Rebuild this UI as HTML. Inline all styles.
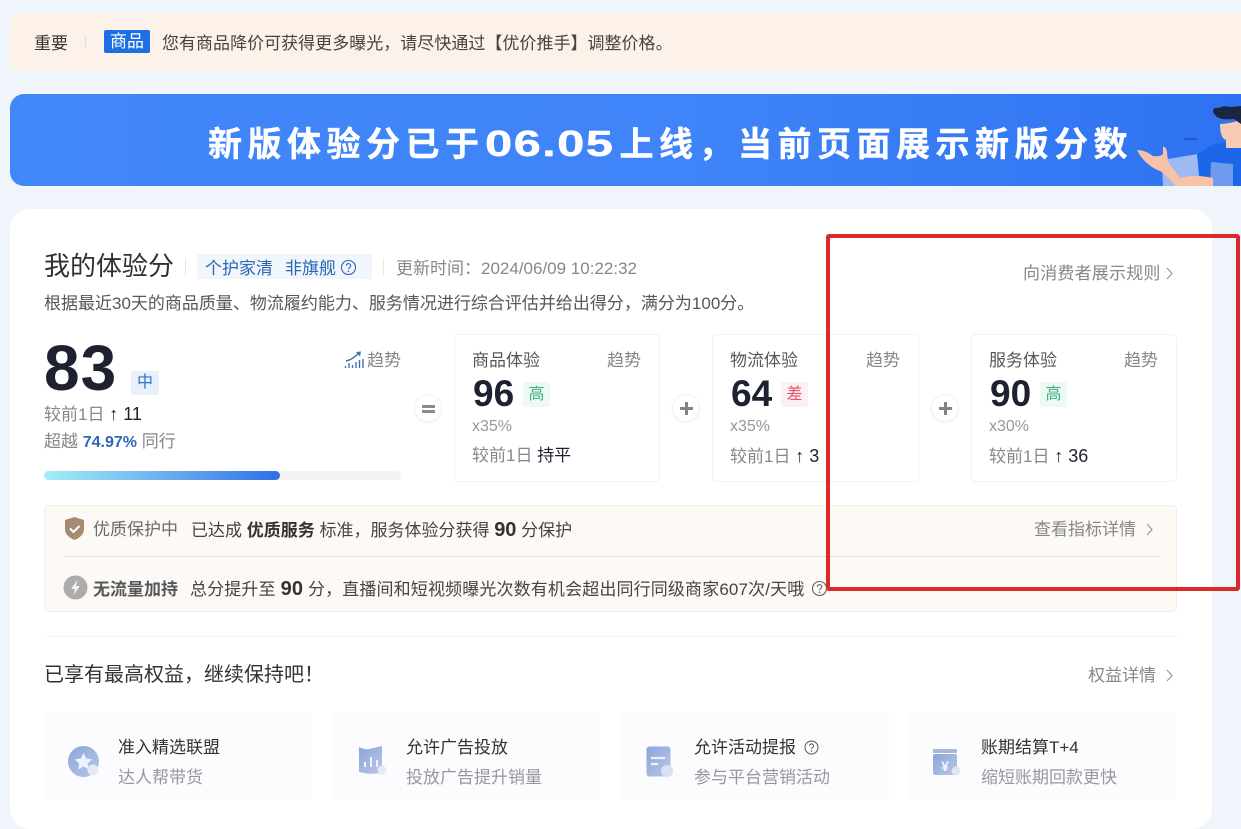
<!DOCTYPE html>
<html lang="zh-CN">
<head>
<meta charset="utf-8">
<title>我的体验分</title>
<style>
html,body{margin:0;padding:0;}
body{width:1241px;height:800px;overflow:hidden;position:relative;background:#f0f4fb;font-family:"Liberation Sans","Noto Sans CJK SC",sans-serif;color:#333;}
.a{position:absolute;}
.t{position:absolute;white-space:nowrap;line-height:22px;height:22px;}
.g{color:#85878b;}
.card{position:absolute;top:334px;height:148px;background:#fff;border:1px solid #f1f2f4;border-radius:4px;box-sizing:border-box;}
.num{position:absolute;white-space:nowrap;font-weight:bold;color:#1d2130;line-height:40px;height:40px;font-size:37px;}
.lvl{position:absolute;width:27px;height:25px;line-height:25px;text-align:center;font-size:16px;border-radius:2px;}
.op{position:absolute;width:28px;height:28px;border-radius:50%;border:1px solid #f1f2f4;background:#fff;box-shadow:0 1px 2px #f3f3f3;box-sizing:border-box;text-align:center;}
.perk{position:absolute;top:712px;height:88px;background:#fcfcff;}
.k{color:#1d2130;font-size:18px;}
</style>
</head>
<body>
<div class="a" style="left:10px;top:13px;width:1231px;height:58px;background:#fdf2ea;border-radius:8px 0 0 8px;"></div>
<div class="t" style="left:34px;top:33px;font-size:17px;color:#333;">重要</div>
<div class="a" style="left:85px;top:36px;width:1px;height:13px;background:#e4ddd8;"></div>
<div class="a" style="left:104px;top:30px;width:46px;height:23px;line-height:23px;background:#1d6fe3;color:#fff;border-radius:2px;text-align:center;font-size:17px;">商品</div>
<div class="t" style="left:162px;top:33px;font-size:17px;color:#444;letter-spacing:.02px;">您有商品降价可获得更多曝光，请尽快通过【优价推手】调整价格。</div>

<div class="a" style="left:10px;top:94px;width:1231px;height:92px;border-radius:14px 0 0 14px;background:linear-gradient(90deg,#4287f8 0%,#3f84f8 55%,#2f72f1 100%);overflow:hidden;">
  <svg width="1231" height="92" style="position:absolute;left:0;top:0;">
    <path d="M1153 92 L1152 66 L1188 60 L1194 92Z" fill="#9dbaf3"/>
    <path d="M1187 60 L1204 50 L1231 47 L1231 92 L1190 92Z" fill="#1c66ea"/>
    <path d="M1200 92 L1201 68 L1223 70 L1223 92Z" fill="#6f9bee"/>
    <path d="M1127 56 Q1135 56 1143 62 Q1150 63 1153 60 L1153 53 Q1156 52 1157 58 L1158 68 L1170 84 Q1185 80 1203 84 L1203 92 L1166 92 L1152 78 Q1135 72 1127 56Z" fill="#f7c3a8"/>
    <path d="M1210 30 Q1218 30 1231 26 L1231 54 L1216 54 L1216 46 Q1210 44 1210 30Z" fill="#f8cbb4"/>
    <path d="M1203 16 Q1204 13 1209 14 Q1213 11 1220 13 L1231 12 L1231 30 L1224 25 Q1214 26 1209 24 Q1203 21 1203 16Z" fill="#1d2640"/>
    <rect x="1174" y="44" width="13" height="2" fill="#1c5ad6"/>
  </svg>
  <div class="t" style="left:198px;top:30px;height:40px;line-height:40px;font-size:34px;font-weight:bold;color:#fff;letter-spacing:5.500px;-webkit-text-stroke:.4px #fff;">新版体验分已于<span style="display:inline-block;width:135px;font-size:36px;letter-spacing:1px;transform:scaleX(1.36);transform-origin:0 50%;">06.05</span>上线，当前页面展示新版分数</div>
</div>

<div class="a" style="left:10px;top:209px;width:1202px;height:620px;background:#fff;border-radius:20px;"></div>

<div class="t" style="left:44px;top:251px;height:30px;line-height:30px;font-size:26px;color:#2f3135;">我的体验分</div>
<div class="a" style="left:185px;top:258px;width:1px;height:18px;background:#e9e9e9;"></div>
<div class="a" style="left:197px;top:254px;width:175px;height:25px;background:#f1f6fd;"></div>
<div class="t" style="left:205px;top:258px;font-size:17px;color:#2c67b2;">个护家清</div>
<div class="t" style="left:285px;top:258px;font-size:17px;color:#2c67b2;">非旗舰</div>
<svg class="a" style="left:340px;top:259px;" width="17" height="17" viewBox="0 0 17 17"><circle cx="8.500" cy="8.500" r="7" fill="none" stroke="#2c67b2" stroke-width="1.100"/><path d="M6.300 6.800a2.200 2.200 0 1 1 3.400 1.800c-.8.500-1.200.9-1.200 1.700" fill="none" stroke="#2c67b2" stroke-width="1.100"/><circle cx="8.500" cy="12.300" r=".8" fill="#2c67b2"/></svg>
<div class="a" style="left:383px;top:258px;width:1px;height:18px;background:#e9e9e9;"></div>
<div class="t g" style="left:396px;top:258px;font-size:17px;">更新时间：2024/06/09 10:22:32</div>
<div class="t" style="left:1023px;top:263px;font-size:17px;color:#85878b;letter-spacing:.2px;">向消费者展示规则</div>
<svg class="a" style="left:1165px;top:266px;" width="9" height="15" viewBox="0 0 9 15"><path d="M2 2l5 5.500-5 5.500" fill="none" stroke="#999" stroke-width="1.200"/></svg>
<div class="t" style="left:44px;top:293px;font-size:17px;color:#55575b;">根据最近30天的商品质量、物流履约能力、服务情况进行综合评估并给出得分，满分为100分。</div>

<div class="t" style="left:44px;top:335px;height:66px;line-height:66px;font-size:64px;font-weight:bold;color:#1d2130;letter-spacing:1px;">83</div>
<div class="lvl" style="left:131px;top:371px;width:28px;height:24px;line-height:24px;background:#e8f1fb;color:#2f72c4;">中</div>
<svg class="a" style="left:344px;top:351px;" width="20" height="18" viewBox="0 0 20 18"><path d="M1.500 17v-2M5 17v-5M8.500 17v-3M12 17v-6M15.500 17v-8M19 17V8" stroke="#3f6fb8" stroke-width="1.400" fill="none"/><path d="M2 10 Q8 9 15 2" stroke="#3f6fb8" stroke-width="1.500" fill="none"/><path d="M12 1l5-.5-1 5z" fill="#3f6fb8"/></svg>
<div class="t g" style="left:367px;top:350px;font-size:17px;">趋势</div>
<div class="t g" style="left:44px;top:403px;font-size:17px;">较前1日 <span class="k">↑ 11</span></div>
<div class="t g" style="left:44px;top:431px;font-size:17px;">超越 <span style="color:#2f66b8;font-weight:bold;font-size:16px;">74.97%</span> 同行</div>
<div class="a" style="left:44px;top:471px;width:357px;height:9px;background:#f2f3f5;border-radius:5px;"></div>
<div class="a" style="left:44px;top:471px;width:236px;height:9px;border-radius:5px;background:linear-gradient(90deg,#a4eef6 0%,#6db0ef 50%,#2f6fe8 100%);"></div>

<div class="op" style="left:414px;top:394px;"><div class="a" style="left:7px;top:9.500px;width:13px;height:3px;background:#8a8c90;"></div><div class="a" style="left:7px;top:15px;width:13px;height:3px;background:#8a8c90;"></div></div>
<div class="card" style="left:454px;width:206px;">
  <div class="t" style="left:17px;top:15px;font-size:17px;color:#55575b;">商品体验</div>
  <div class="t g" style="left:152px;top:15px;font-size:17px;">趋势</div>
  <div class="num" style="left:18px;top:39px;">96</div>
  <div class="lvl" style="left:68px;top:47px;background:#edf9f3;color:#37b27d;">高</div>
  <div class="t" style="left:17px;top:81px;font-size:16px;color:#96989c;">x35%</div>
  <div class="t g" style="left:17px;top:110px;font-size:17px;">较前1日 <span style="color:#1d2130;">持平</span></div>
</div>
<div class="op" style="left:672px;top:394px;"><div class="a" style="left:7px;top:12px;width:13px;height:3px;background:#808286;"></div><div class="a" style="left:12px;top:7px;width:3px;height:13px;background:#808286;"></div></div>
<div class="card" style="left:712px;width:207px;">
  <div class="t" style="left:17px;top:15px;font-size:17px;color:#55575b;">物流体验</div>
  <div class="t g" style="left:153px;top:15px;font-size:17px;">趋势</div>
  <div class="num" style="left:18px;top:39px;">64</div>
  <div class="lvl" style="left:68px;top:47px;background:#fdf0f2;color:#e5526a;">差</div>
  <div class="t" style="left:17px;top:81px;font-size:16px;color:#96989c;">x35%</div>
  <div class="t g" style="left:17px;top:110px;font-size:17px;">较前1日 <span class="k">↑ 3</span></div>
</div>
<div class="op" style="left:931px;top:394px;"><div class="a" style="left:7px;top:12px;width:13px;height:3px;background:#808286;"></div><div class="a" style="left:12px;top:7px;width:3px;height:13px;background:#808286;"></div></div>
<div class="card" style="left:971px;width:206px;">
  <div class="t" style="left:17px;top:15px;font-size:17px;color:#55575b;">服务体验</div>
  <div class="t g" style="left:152px;top:15px;font-size:17px;">趋势</div>
  <div class="num" style="left:18px;top:39px;">90</div>
  <div class="lvl" style="left:68px;top:47px;background:#edf9f3;color:#37b27d;">高</div>
  <div class="t" style="left:17px;top:81px;font-size:16px;color:#96989c;">x30%</div>
  <div class="t g" style="left:17px;top:110px;font-size:17px;">较前1日 <span class="k">↑ 36</span></div>
</div>

<div class="a" style="left:44px;top:505px;width:1133px;height:107px;background:#fdfaf6;border:1px solid #f4eee6;border-radius:5px;box-sizing:border-box;"></div>
<svg class="a" style="left:64px;top:516px;" width="21" height="25" viewBox="0 0 21 25"><path d="M10.500 1 L20 4 V13 Q20 20 10.500 24 Q1 20 1 13 V4Z" fill="#a48b72"/><path d="M6 12.500l3.500 3.500 6-6" fill="none" stroke="#fff" stroke-width="2"/></svg>
<div class="t" style="left:93px;top:519px;font-size:17px;color:#6d6a66;">优质保护中</div>
<div class="t" style="left:191px;top:519px;font-size:17px;color:#444;">已达成 <b style="color:#333;">优质服务</b> 标准，服务体验分获得 <b style="font-size:20px;color:#333;">90</b> 分保护</div>
<div class="t" style="left:1034px;top:519px;font-size:17px;color:#85878b;">查看指标详情</div>
<svg class="a" style="left:1145px;top:522px;" width="9" height="15" viewBox="0 0 9 15"><path d="M2 2l5 5.500-5 5.500" fill="none" stroke="#999" stroke-width="1.200"/></svg>
<div class="a" style="left:64px;top:556px;width:1095px;height:1px;background:#e6e3de;"></div>
<svg class="a" style="left:63px;top:575px;" width="25" height="25" viewBox="0 0 25 25"><circle cx="12.500" cy="12.500" r="12" fill="#acacac"/><path d="M14.500 5 L8 14 H12 L10.500 20 L17 11 H13Z" fill="#f4f4f4"/></svg>
<div class="t" style="left:93px;top:579px;font-size:17px;font-weight:bold;color:#55575b;">无流量加持</div>
<div class="t" style="left:190px;top:578px;font-size:17px;color:#444;letter-spacing:.14px;">总分提升至 <b style="font-size:20px;color:#333;">90</b> 分，直播间和短视频曝光次数有机会超出同行同级商家607次/天哦</div>
<svg class="a" style="left:811px;top:580px;" width="17" height="17" viewBox="0 0 17 17"><circle cx="8.500" cy="8.500" r="7" fill="none" stroke="#666" stroke-width="1.100"/><path d="M6.300 6.800a2.200 2.200 0 1 1 3.400 1.800c-.8.500-1.200.9-1.200 1.700" fill="none" stroke="#666" stroke-width="1.100"/><circle cx="8.500" cy="12.300" r=".8" fill="#666"/></svg>

<div class="a" style="left:44px;top:636px;width:1133px;height:1px;background:#f3f4f6;"></div>
<div class="t" style="left:44px;top:664px;font-size:20px;color:#333;">已享有最高权益，继续保持吧！</div>
<div class="t" style="left:1088px;top:665px;font-size:17px;color:#85878b;">权益详情</div>
<svg class="a" style="left:1165px;top:668px;" width="9" height="15" viewBox="0 0 9 15"><path d="M2 2l5 5.500-5 5.500" fill="none" stroke="#999" stroke-width="1.200"/></svg>

<div class="perk" style="left:44px;width:268px;"></div>
<div class="perk" style="left:332px;width:268px;"></div>
<div class="perk" style="left:621px;width:268px;"></div>
<div class="perk" style="left:908px;width:268px;"></div>

<svg class="a" style="left:66px;top:744px;" width="38" height="36" viewBox="0 0 38 36"><defs><linearGradient id="p" x1="0" y1="0" x2="1" y2="1"><stop offset="0" stop-color="#8aa6dc"/><stop offset="1" stop-color="#b9c6e6"/></linearGradient></defs><circle cx="17.500" cy="17.500" r="15.500" fill="url(#p)"/><path d="M17.500 9l2.700 5.500 6 .8-4.400 4.200 1.100 6-5.400-2.900-5.400 2.900 1.100-6-4.400-4.200 6-.8z" fill="#eef2fb"/><circle cx="27" cy="26" r="5.500" fill="#e4eaf6"/></svg>
<div class="t" style="left:118px;top:737px;font-size:17px;color:#333;">准入精选联盟</div>
<div class="t" style="left:118px;top:767px;font-size:17px;color:#96989c;">达人帮带货</div>

<svg class="a" style="left:356px;top:744px;" width="32" height="36" viewBox="0 0 32 36"><path d="M3 3 Q9 6 13 5 L26 2 V29 Q14 31 3 28Z" fill="url(#p)"/><path d="M9 18v5M15 13v10M21 16v7" stroke="#eef2fb" stroke-width="2" fill="none"/><circle cx="26" cy="26" r="4.500" fill="#e4eaf6"/></svg>
<div class="t" style="left:406px;top:737px;font-size:17px;color:#333;">允许广告投放</div>
<div class="t" style="left:406px;top:767px;font-size:17px;color:#96989c;">投放广告提升销量</div>

<svg class="a" style="left:644px;top:745px;" width="34" height="35" viewBox="0 0 34 35"><rect x="2.500" y="1.500" width="24" height="30" rx="3" fill="url(#p)"/><path d="M7 13h14M7 19h7" stroke="#eef2fb" stroke-width="2.200" fill="none"/><circle cx="23" cy="26" r="6" fill="#d9e2f4"/></svg>
<div class="t" style="left:694px;top:737px;font-size:17px;color:#333;">允许活动提报</div>
<svg class="a" style="left:803px;top:739px;" width="17" height="17" viewBox="0 0 17 17"><circle cx="8.500" cy="8.500" r="6.500" fill="none" stroke="#555" stroke-width="1"/><path d="M6.500 6.800a2 2 0 1 1 3.200 1.700c-.8.500-1.200.9-1.200 1.600" fill="none" stroke="#555" stroke-width="1"/><circle cx="8.500" cy="12" r=".7" fill="#555"/></svg>
<div class="t" style="left:694px;top:767px;font-size:17px;color:#96989c;">参与平台营销活动</div>

<svg class="a" style="left:932px;top:746px;" width="34" height="34" viewBox="0 0 34 34"><path d="M1 3h24v4H1z" fill="#a9b7d8"/><rect x="1" y="8" width="24" height="21" rx="2" fill="url(#p)"/><text x="13" y="25" text-anchor="middle" font-size="14" font-weight="bold" fill="#f2f5fc" font-family="Liberation Sans">¥</text><circle cx="24" cy="25" r="4.500" fill="#dfe6f5"/></svg>
<div class="t" style="left:981px;top:737px;font-size:17px;color:#333;">账期结算T+4</div>
<div class="t" style="left:981px;top:767px;font-size:17px;color:#96989c;">缩短账期回款更快</div>

<div class="a" style="left:826px;top:234px;width:414px;height:357px;border:4px solid #dc2a2a;border-radius:3px;box-sizing:border-box;"></div>
</body>
</html>
